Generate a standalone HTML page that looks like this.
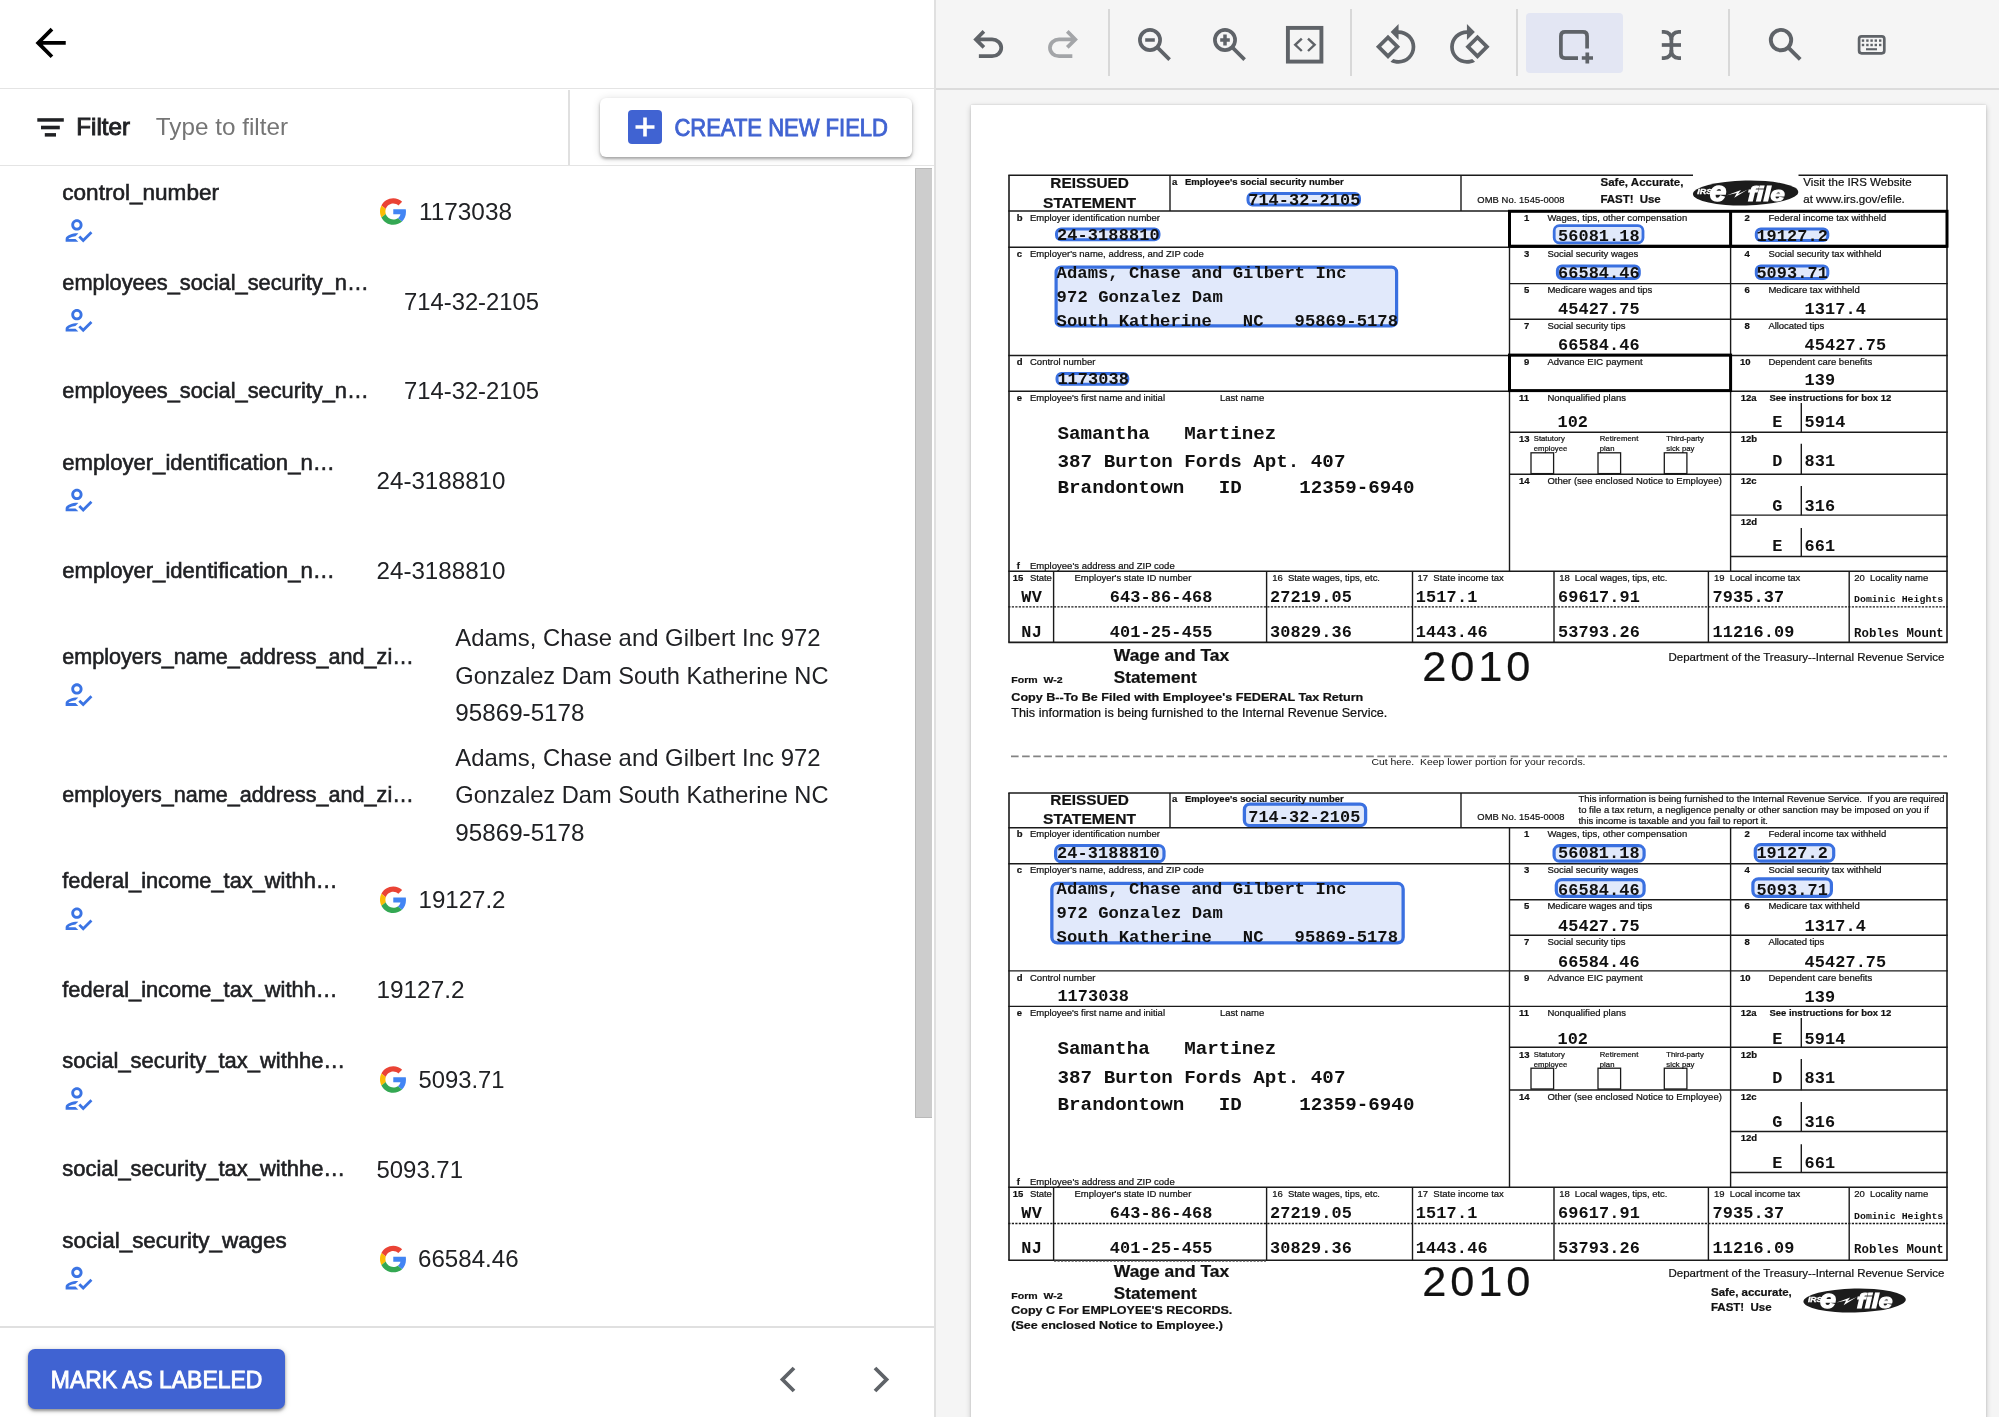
<!DOCTYPE html>
<html lang="en"><head><meta charset="utf-8"><title>Document labeling</title>
<style>
html,body{margin:0;padding:0}
body{width:1999px;height:1417px;position:relative;overflow:hidden;background:#fff;font-family:"Liberation Sans", sans-serif;}
svg text{font-family:"Liberation Sans", sans-serif;white-space:pre}
svg text.m{font-family:"Liberation Mono", monospace;stroke:none}
svg text.b{font-weight:700}
.abs{position:absolute}
#left{left:0;top:0;width:934px;height:1417px;background:#fff}
#divider{left:934px;top:0;width:2px;height:1417px;background:#e0e0e0}
#right{left:936px;top:0;width:1063px;height:1417px;background:#f5f5f5;overflow:hidden}
#toolbar{left:0;top:0;width:1063px;height:88px;border-bottom:2px solid #dcdcdc;background:#f5f5f5}
#paper{left:34.75px;top:104.75px;width:1015px;height:1314px;background:#fff;box-shadow:0 2px 6px rgba(0,0,0,.2),0 0 2px rgba(0,0,0,.14)}
#hdr{left:0;top:0;width:934px;height:88px;border-bottom:1.8px solid #e4e4e4}
#filterrow{left:0;top:90px;width:934px;height:74.8px;border-bottom:1.6px solid #e4e4e4}
#fsep{left:568px;top:90px;width:2px;height:75px;background:#e0e0e0}
#createbtn{left:600px;top:98px;width:312px;height:59px;border-radius:6px;background:#fff;box-shadow:0 2px 3px rgba(0,0,0,.3),0 1px 8px rgba(0,0,0,.14)}
#plus{left:628px;top:110px;width:34px;height:34px;border-radius:4px;background:#4063d2}
#thumb{left:915.2px;top:168.3px;width:16.6px;height:949.6px;background:#cdcdcd;border:1.3px solid #b9b9b9;border-right-width:0;box-sizing:border-box}
#bottombar{left:0;top:1326px;width:934px;height:91px;border-top:2px solid #e0e0e0;background:#fff}
#markbtn{left:28.2px;top:1349.2px;width:257.2px;height:60px;border-radius:7px;background:#4063d2;box-shadow:0 2px 3px rgba(0,0,0,.35),0 1px 6px rgba(0,0,0,.18)}
#selbg{left:590px;top:13px;width:97px;height:60px;border-radius:4px;background:#e3e6f3}
.tsep{width:2px;top:9px;height:67px;background:#d8d8d8}
#ov{left:0;top:0;width:1999px;height:1417px;pointer-events:none;will-change:transform}
</style></head>
<body>
<div id="left" class="abs">
  <div id="hdr" class="abs"></div>
  <div id="filterrow" class="abs"></div>
  <div id="fsep" class="abs"></div>
  <div id="createbtn" class="abs"></div>
  <div id="plus" class="abs"></div>
  <div id="thumb" class="abs"></div>
  <div id="bottombar" class="abs"></div>
  <div id="markbtn" class="abs"></div>
</div>
<div id="divider" class="abs"></div>
<div id="right" class="abs">
  <div id="paper" class="abs"></div>
  <div id="toolbar" class="abs">
    <div id="selbg" class="abs"></div>
    <div class="abs tsep" style="left:172px"></div>
    <div class="abs tsep" style="left:414px"></div>
    <div class="abs tsep" style="left:580px"></div>
    <div class="abs tsep" style="left:792px"></div>
  </div>
</div>
<svg id="ov" class="abs" width="1999" height="1417" viewBox="0 0 1999 1417">
<g id="ui">
<path transform="translate(27.94,20.3) scale(1.89)" fill="#000" d="M20 11H7.83l5.59-5.59L12 4l-8 8 8 8 1.41-1.41L7.83 13H20v-2z"/>
<g fill="#202124"><rect x="37.3" y="118.2" width="26.5" height="3.5"/><rect x="41" y="125.7" width="18.8" height="3.6"/><rect x="44.8" y="133.1" width="11.2" height="3.5"/></g>
<text x="76.30" y="135.00" font-size="24" textLength="53.70" lengthAdjust="spacingAndGlyphs" fill="#202124" stroke="#202124" stroke-width="0.9">Filter</text>
<text x="155.80" y="135.00" font-size="24" fill="#757575" textLength="132.20" lengthAdjust="spacingAndGlyphs">Type to filter</text>
<path d="M645 117.5v19M635.5 127h19" stroke="#fff" stroke-width="3.6" fill="none"/>
<text x="674.40" y="135.90" font-size="24" textLength="213.60" lengthAdjust="spacingAndGlyphs" fill="#4063d2" stroke="#4063d2" stroke-width="0.9">CREATE NEW FIELD</text>
<text x="62.30" y="200.00" font-size="22.4" textLength="156.70" lengthAdjust="spacingAndGlyphs" fill="#202124" stroke="#202124" stroke-width="0.6">control_number</text>
<path transform="translate(61.4,213.6) scale(1.41)" fill="#3b74e4" d="M11 12c2.21 0 4-1.79 4-4s-1.79-4-4-4-4 1.79-4 4 1.79 4 4 4zm0-6c1.1 0 2 .9 2 2s-.9 2-2 2-2-.9-2-2 .9-2 2-2zM5 18c.2-.63 2.57-1.68 4.96-1.94l2.04-2c-.39-.04-.68-.06-1-.06-2.67 0-8 1.34-8 4v2h9l-2-2H5zm15.6-5.5l-5.13 5.17-2.07-2.08L12 17l3.47 3.5L22 13.91z"/>
<g transform="translate(380,198.2) scale(0.553)"><path fill="#EA4335" d="M24 9.5c3.54 0 6.71 1.22 9.21 3.6l6.85-6.85C35.9 2.38 30.47 0 24 0 14.62 0 6.51 5.38 2.56 13.22l7.98 6.19C12.43 13.72 17.74 9.5 24 9.5z"/><path fill="#4285F4" d="M46.98 24.55c0-1.57-.15-3.09-.38-4.55H24v9.02h12.94c-.58 2.96-2.26 5.48-4.78 7.18l7.73 6c4.51-4.18 7.09-10.36 7.09-17.65z"/><path fill="#FBBC05" d="M10.53 28.59c-.48-1.45-.76-2.99-.76-4.59s.27-3.14.76-4.59l-7.98-6.19C.92 16.46 0 20.12 0 24c0 3.88.92 7.54 2.56 10.78l7.97-6.19z"/><path fill="#34A853" d="M24 48c6.48 0 11.93-2.13 15.89-5.81l-7.73-6c-2.15 1.45-4.92 2.3-8.16 2.3-6.26 0-11.57-4.22-13.47-9.91l-7.98 6.19C6.51 42.62 14.62 48 24 48z"/></g>
<text x="419.00" y="219.70" font-size="24" fill="#202124" textLength="93.00" lengthAdjust="spacingAndGlyphs">1173038</text>
<text x="62.30" y="289.85" font-size="22.4" textLength="306.50" lengthAdjust="spacingAndGlyphs" fill="#202124" stroke="#202124" stroke-width="0.6">employees_social_security_n…</text>
<path transform="translate(61.4,303.4) scale(1.41)" fill="#3b74e4" d="M11 12c2.21 0 4-1.79 4-4s-1.79-4-4-4-4 1.79-4 4 1.79 4 4 4zm0-6c1.1 0 2 .9 2 2s-.9 2-2 2-2-.9-2-2 .9-2 2-2zM5 18c.2-.63 2.57-1.68 4.96-1.94l2.04-2c-.39-.04-.68-.06-1-.06-2.67 0-8 1.34-8 4v2h9l-2-2H5zm15.6-5.5l-5.13 5.17-2.07-2.08L12 17l3.47 3.5L22 13.91z"/>
<text x="404.00" y="309.55" font-size="24" fill="#202124" textLength="135.00" lengthAdjust="spacingAndGlyphs">714-32-2105</text>
<text x="62.30" y="398.30" font-size="22.4" textLength="306.50" lengthAdjust="spacingAndGlyphs" fill="#202124" stroke="#202124" stroke-width="0.6">employees_social_security_n…</text>
<text x="404.00" y="399.40" font-size="24" fill="#202124" textLength="135.00" lengthAdjust="spacingAndGlyphs">714-32-2105</text>
<text x="62.30" y="469.55" font-size="22.4" textLength="272.50" lengthAdjust="spacingAndGlyphs" fill="#202124" stroke="#202124" stroke-width="0.6">employer_identification_n…</text>
<path transform="translate(61.4,483.1) scale(1.41)" fill="#3b74e4" d="M11 12c2.21 0 4-1.79 4-4s-1.79-4-4-4-4 1.79-4 4 1.79 4 4 4zm0-6c1.1 0 2 .9 2 2s-.9 2-2 2-2-.9-2-2 .9-2 2-2zM5 18c.2-.63 2.57-1.68 4.96-1.94l2.04-2c-.39-.04-.68-.06-1-.06-2.67 0-8 1.34-8 4v2h9l-2-2H5zm15.6-5.5l-5.13 5.17-2.07-2.08L12 17l3.47 3.5L22 13.91z"/>
<text x="376.50" y="489.25" font-size="24" fill="#202124" textLength="129.00" lengthAdjust="spacingAndGlyphs">24-3188810</text>
<text x="62.30" y="578.00" font-size="22.4" textLength="272.50" lengthAdjust="spacingAndGlyphs" fill="#202124" stroke="#202124" stroke-width="0.6">employer_identification_n…</text>
<text x="376.50" y="579.10" font-size="24" fill="#202124" textLength="129.00" lengthAdjust="spacingAndGlyphs">24-3188810</text>
<text x="62.30" y="664.08" font-size="22.4" textLength="351.50" lengthAdjust="spacingAndGlyphs" fill="#202124" stroke="#202124" stroke-width="0.6">employers_name_address_and_zi…</text>
<path transform="translate(61.4,677.7) scale(1.41)" fill="#3b74e4" d="M11 12c2.21 0 4-1.79 4-4s-1.79-4-4-4-4 1.79-4 4 1.79 4 4 4zm0-6c1.1 0 2 .9 2 2s-.9 2-2 2-2-.9-2-2 .9-2 2-2zM5 18c.2-.63 2.57-1.68 4.96-1.94l2.04-2c-.39-.04-.68-.06-1-.06-2.67 0-8 1.34-8 4v2h9l-2-2H5zm15.6-5.5l-5.13 5.17-2.07-2.08L12 17l3.47 3.5L22 13.91z"/>
<text x="455.30" y="646.30" font-size="24" fill="#202124" textLength="365.20" lengthAdjust="spacingAndGlyphs">Adams, Chase and Gilbert Inc 972</text>
<text x="455.30" y="683.70" font-size="24" fill="#202124" textLength="373.20" lengthAdjust="spacingAndGlyphs">Gonzalez Dam South Katherine NC</text>
<text x="455.30" y="721.10" font-size="24" fill="#202124" textLength="129.20" lengthAdjust="spacingAndGlyphs">95869-5178</text>
<text x="62.30" y="802.18" font-size="22.4" textLength="351.50" lengthAdjust="spacingAndGlyphs" fill="#202124" stroke="#202124" stroke-width="0.6">employers_name_address_and_zi…</text>
<text x="455.30" y="765.80" font-size="24" fill="#202124" textLength="365.20" lengthAdjust="spacingAndGlyphs">Adams, Chase and Gilbert Inc 972</text>
<text x="455.30" y="803.20" font-size="24" fill="#202124" textLength="373.20" lengthAdjust="spacingAndGlyphs">Gonzalez Dam South Katherine NC</text>
<text x="455.30" y="840.60" font-size="24" fill="#202124" textLength="129.20" lengthAdjust="spacingAndGlyphs">95869-5178</text>
<text x="62.30" y="888.25" font-size="22.4" textLength="275.30" lengthAdjust="spacingAndGlyphs" fill="#202124" stroke="#202124" stroke-width="0.6">federal_income_tax_withh…</text>
<path transform="translate(61.4,901.9) scale(1.41)" fill="#3b74e4" d="M11 12c2.21 0 4-1.79 4-4s-1.79-4-4-4-4 1.79-4 4 1.79 4 4 4zm0-6c1.1 0 2 .9 2 2s-.9 2-2 2-2-.9-2-2 .9-2 2-2zM5 18c.2-.63 2.57-1.68 4.96-1.94l2.04-2c-.39-.04-.68-.06-1-.06-2.67 0-8 1.34-8 4v2h9l-2-2H5zm15.6-5.5l-5.13 5.17-2.07-2.08L12 17l3.47 3.5L22 13.91z"/>
<g transform="translate(380,886.5) scale(0.553)"><path fill="#EA4335" d="M24 9.5c3.54 0 6.71 1.22 9.21 3.6l6.85-6.85C35.9 2.38 30.47 0 24 0 14.62 0 6.51 5.38 2.56 13.22l7.98 6.19C12.43 13.72 17.74 9.5 24 9.5z"/><path fill="#4285F4" d="M46.98 24.55c0-1.57-.15-3.09-.38-4.55H24v9.02h12.94c-.58 2.96-2.26 5.48-4.78 7.18l7.73 6c4.51-4.18 7.09-10.36 7.09-17.65z"/><path fill="#FBBC05" d="M10.53 28.59c-.48-1.45-.76-2.99-.76-4.59s.27-3.14.76-4.59l-7.98-6.19C.92 16.46 0 20.12 0 24c0 3.88.92 7.54 2.56 10.78l7.97-6.19z"/><path fill="#34A853" d="M24 48c6.48 0 11.93-2.13 15.89-5.81l-7.73-6c-2.15 1.45-4.92 2.3-8.16 2.3-6.26 0-11.57-4.22-13.47-9.91l-7.98 6.19C6.51 42.62 14.62 48 24 48z"/></g>
<text x="418.50" y="907.95" font-size="24" fill="#202124" textLength="87.00" lengthAdjust="spacingAndGlyphs">19127.2</text>
<text x="62.30" y="996.70" font-size="22.4" textLength="275.30" lengthAdjust="spacingAndGlyphs" fill="#202124" stroke="#202124" stroke-width="0.6">federal_income_tax_withh…</text>
<text x="376.50" y="997.80" font-size="24" fill="#202124" textLength="88.00" lengthAdjust="spacingAndGlyphs">19127.2</text>
<text x="62.30" y="1067.95" font-size="22.4" textLength="283.00" lengthAdjust="spacingAndGlyphs" fill="#202124" stroke="#202124" stroke-width="0.6">social_security_tax_withhe…</text>
<path transform="translate(61.4,1081.6) scale(1.41)" fill="#3b74e4" d="M11 12c2.21 0 4-1.79 4-4s-1.79-4-4-4-4 1.79-4 4 1.79 4 4 4zm0-6c1.1 0 2 .9 2 2s-.9 2-2 2-2-.9-2-2 .9-2 2-2zM5 18c.2-.63 2.57-1.68 4.96-1.94l2.04-2c-.39-.04-.68-.06-1-.06-2.67 0-8 1.34-8 4v2h9l-2-2H5zm15.6-5.5l-5.13 5.17-2.07-2.08L12 17l3.47 3.5L22 13.91z"/>
<g transform="translate(380,1066.2) scale(0.553)"><path fill="#EA4335" d="M24 9.5c3.54 0 6.71 1.22 9.21 3.6l6.85-6.85C35.9 2.38 30.47 0 24 0 14.62 0 6.51 5.38 2.56 13.22l7.98 6.19C12.43 13.72 17.74 9.5 24 9.5z"/><path fill="#4285F4" d="M46.98 24.55c0-1.57-.15-3.09-.38-4.55H24v9.02h12.94c-.58 2.96-2.26 5.48-4.78 7.18l7.73 6c4.51-4.18 7.09-10.36 7.09-17.65z"/><path fill="#FBBC05" d="M10.53 28.59c-.48-1.45-.76-2.99-.76-4.59s.27-3.14.76-4.59l-7.98-6.19C.92 16.46 0 20.12 0 24c0 3.88.92 7.54 2.56 10.78l7.97-6.19z"/><path fill="#34A853" d="M24 48c6.48 0 11.93-2.13 15.89-5.81l-7.73-6c-2.15 1.45-4.92 2.3-8.16 2.3-6.26 0-11.57-4.22-13.47-9.91l-7.98 6.19C6.51 42.62 14.62 48 24 48z"/></g>
<text x="418.50" y="1087.65" font-size="24" fill="#202124" textLength="86.00" lengthAdjust="spacingAndGlyphs">5093.71</text>
<text x="62.30" y="1176.40" font-size="22.4" textLength="283.00" lengthAdjust="spacingAndGlyphs" fill="#202124" stroke="#202124" stroke-width="0.6">social_security_tax_withhe…</text>
<text x="376.50" y="1177.50" font-size="24" fill="#202124" textLength="86.50" lengthAdjust="spacingAndGlyphs">5093.71</text>
<text x="62.30" y="1247.65" font-size="22.4" textLength="224.50" lengthAdjust="spacingAndGlyphs" fill="#202124" stroke="#202124" stroke-width="0.6">social_security_wages</text>
<path transform="translate(61.4,1261.2) scale(1.41)" fill="#3b74e4" d="M11 12c2.21 0 4-1.79 4-4s-1.79-4-4-4-4 1.79-4 4 1.79 4 4 4zm0-6c1.1 0 2 .9 2 2s-.9 2-2 2-2-.9-2-2 .9-2 2-2zM5 18c.2-.63 2.57-1.68 4.96-1.94l2.04-2c-.39-.04-.68-.06-1-.06-2.67 0-8 1.34-8 4v2h9l-2-2H5zm15.6-5.5l-5.13 5.17-2.07-2.08L12 17l3.47 3.5L22 13.91z"/>
<g transform="translate(380,1245.8) scale(0.553)"><path fill="#EA4335" d="M24 9.5c3.54 0 6.71 1.22 9.21 3.6l6.85-6.85C35.9 2.38 30.47 0 24 0 14.62 0 6.51 5.38 2.56 13.22l7.98 6.19C12.43 13.72 17.74 9.5 24 9.5z"/><path fill="#4285F4" d="M46.98 24.55c0-1.57-.15-3.09-.38-4.55H24v9.02h12.94c-.58 2.96-2.26 5.48-4.78 7.18l7.73 6c4.51-4.18 7.09-10.36 7.09-17.65z"/><path fill="#FBBC05" d="M10.53 28.59c-.48-1.45-.76-2.99-.76-4.59s.27-3.14.76-4.59l-7.98-6.19C.92 16.46 0 20.12 0 24c0 3.88.92 7.54 2.56 10.78l7.97-6.19z"/><path fill="#34A853" d="M24 48c6.48 0 11.93-2.13 15.89-5.81l-7.73-6c-2.15 1.45-4.92 2.3-8.16 2.3-6.26 0-11.57-4.22-13.47-9.91l-7.98 6.19C6.51 42.62 14.62 48 24 48z"/></g>
<text x="418.00" y="1267.35" font-size="24" fill="#202124" textLength="100.60" lengthAdjust="spacingAndGlyphs">66584.46</text>
<text x="50.80" y="1388.00" font-size="24" textLength="211.50" lengthAdjust="spacingAndGlyphs" fill="#fff" stroke="#fff" stroke-width="0.9">MARK AS LABELED</text>
<path d="M794,1368 L782.5,1379.5 L794,1391" fill="none" stroke="#5f6368" stroke-width="3.8"/>
<path d="M875,1368 L886.5,1379.5 L875,1391" fill="none" stroke="#5f6368" stroke-width="3.8"/>
<path transform="translate(965.8,22.6) scale(1.8667)" fill="#5f6368" d="M7 19v-2h7.1q1.575 0 2.737-1T18 13.5T16.837 11T14.1 10H7.8l2.6 2.6L9 14L4 9l5-5l1.4 1.4L7.8 8h6.3q2.425 0 4.163 1.575T20 13.5t-1.737 3.925T14.1 19z"/>
<path transform="translate(1085.4,22.6) scale(-1.8667,1.8667)" fill="#a3a5a8" d="M7 19v-2h7.1q1.575 0 2.737-1T18 13.5T16.837 11T14.1 10H7.8l2.6 2.6L9 14L4 9l5-5l1.4 1.4L7.8 8h6.3q2.425 0 4.163 1.575T20 13.5t-1.737 3.925T14.1 19z"/>
<g fill="none" stroke="#5f6368" stroke-width="3.7"><circle cx="1150" cy="40" r="10.1"/><path d="M1157.6,47.6 L1169.6,59.6"/><path stroke-width="3.5" d="M1145.2,40 H1154.8"/></g>
<g fill="none" stroke="#5f6368" stroke-width="3.7"><circle cx="1225" cy="40" r="10.1"/><path d="M1232.6,47.6 L1244.6,59.6"/><path stroke-width="3.5" d="M1220.2,40 H1229.8 M1225,34.6 V45.4"/></g>
<g fill="none" stroke="#5f6368"><rect x="1287.9" y="27.9" width="33.5" height="33.7" stroke-width="3.9"/><path stroke-width="2.4" d="M1301.8,38.6 L1295.2,44.8 L1301.8,51 M1308,38.6 L1314.6,44.8 L1308,51"/></g>
<path transform="translate(1374.3,22.7) scale(1.8667)" fill="#5f6368" d="M7.34 6.41L.86 12.9l6.49 6.48 6.49-6.48-6.5-6.49zM3.69 12.9l3.66-3.66L11 12.9l-3.66 3.66-3.65-3.66zm15.67-6.26C17.61 4.88 15.3 4 13 4V.76L8.76 5 13 9.24V6c1.79 0 3.58.68 4.95 2.05 2.73 2.73 2.73 7.17 0 9.9C16.58 19.32 14.79 20 13 20c-.97 0-1.94-.21-2.84-.61l-1.49 1.49C10.02 21.62 11.51 22 13 22c2.3 0 4.61-.88 6.36-2.64 3.52-3.51 3.52-9.21 0-12.72z"/>
<path transform="translate(1491.2,22.7) scale(-1.8667,1.8667)" fill="#5f6368" d="M7.34 6.41L.86 12.9l6.49 6.48 6.49-6.48-6.5-6.49zM3.69 12.9l3.66-3.66L11 12.9l-3.66 3.66-3.65-3.66zm15.67-6.26C17.61 4.88 15.3 4 13 4V.76L8.76 5 13 9.24V6c1.79 0 3.58.68 4.95 2.05 2.73 2.73 2.73 7.17 0 9.9C16.58 19.32 14.79 20 13 20c-.97 0-1.94-.21-2.84-.61l-1.49 1.49C10.02 21.62 11.51 22 13 22c2.3 0 4.61-.88 6.36-2.64 3.52-3.51 3.52-9.21 0-12.72z"/>
<g fill="none" stroke="#5f6368" stroke-width="3.7"><path d="M1578,58.1 H1565 Q1560.9,58.1 1560.9,54 V36 Q1560.9,31.9 1565,31.9 H1583 Q1587.1,31.9 1587.1,36 V48.6"/><path d="M1581.8,58 H1593 M1587.3,52.4 V63.6"/></g>
<g fill="none" stroke="#5f6368" stroke-width="3.7"><path d="M1661.8,31.9 H1664 Q1671.4,32.2 1671.4,40 V50 Q1671.4,57.8 1664,58.1 H1661.8"/><path d="M1681,31.9 H1678.8 Q1671.4,32.2 1671.4,40 M1671.4,50 Q1671.4,57.8 1678.8,58.1 H1681"/><path d="M1661.8,45 H1681"/></g>
<g fill="none" stroke="#5f6368" stroke-width="3.9"><circle cx="1781" cy="40.1" r="10.2"/><path d="M1788.6,47.8 L1800.2,59.4"/></g>
<rect x="1859.1" y="36.3" width="25.2" height="17" rx="2.5" fill="none" stroke="#5f6368" stroke-width="2.7"/><rect x="1861.8" y="39.4" width="2.4" height="2.4" fill="#5f6368"/><rect x="1866.2" y="39.4" width="2.4" height="2.4" fill="#5f6368"/><rect x="1870.4" y="39.4" width="2.4" height="2.4" fill="#5f6368"/><rect x="1874.6" y="39.4" width="2.4" height="2.4" fill="#5f6368"/><rect x="1879.0" y="39.4" width="2.4" height="2.4" fill="#5f6368"/><rect x="1861.8" y="43.8" width="2.4" height="2.4" fill="#5f6368"/><rect x="1866.2" y="43.8" width="2.4" height="2.4" fill="#5f6368"/><rect x="1870.4" y="43.8" width="2.4" height="2.4" fill="#5f6368"/><rect x="1874.6" y="43.8" width="2.4" height="2.4" fill="#5f6368"/><rect x="1879.0" y="43.8" width="2.4" height="2.4" fill="#5f6368"/><rect x="1866" y="48.2" width="11" height="2.1" fill="#5f6368"/>
</g>
<g id="doc">
<rect x="1248.00" y="193.40" width="111.50" height="11.60" rx="4.5" fill="#e1e9fb" stroke="#3a70e0" stroke-width="3.0"/>
<rect x="1056.50" y="229.00" width="102.50" height="10.80" rx="4.5" fill="#e1e9fb" stroke="#3a70e0" stroke-width="3.0"/>
<rect x="1056.10" y="267.20" width="340.50" height="58.70" rx="5" fill="#e1e9fb" stroke="#3a70e0" stroke-width="3.2"/>
<rect x="1057.00" y="373.50" width="70.80" height="10.80" rx="4.5" fill="#e1e9fb" stroke="#3a70e0" stroke-width="3.0"/>
<rect x="1554.20" y="225.70" width="88.80" height="17.10" rx="5" fill="#e1e9fb" stroke="#3a70e0" stroke-width="2.8"/>
<rect x="1756.30" y="229.10" width="71.50" height="11.50" rx="4.5" fill="#e1e9fb" stroke="#3a70e0" stroke-width="3.0"/>
<rect x="1557.40" y="266.10" width="81.90" height="12.30" rx="4.5" fill="#e1e9fb" stroke="#3a70e0" stroke-width="3.0"/>
<rect x="1756.30" y="266.10" width="71.50" height="12.30" rx="4.5" fill="#e1e9fb" stroke="#3a70e0" stroke-width="3.0"/>
<g fill="none" stroke="#1a1a1a"><path d="M1008.3,175.3 L1693.0,175.3" stroke-width="1.6" /><path d="M1798.5,175.3 L1947.7,175.3" stroke-width="1.6" /><path d="M1008.3,211.0 L1947.7,211.0" stroke-width="1.4" /><path d="M1008.3,247.2 L1947.7,247.2" stroke-width="1.4" /><path d="M1509.5,283.6 L1947.7,283.6" stroke-width="1.4" /><path d="M1509.5,319.3 L1947.7,319.3" stroke-width="1.4" /><path d="M1008.3,355.5 L1947.7,355.5" stroke-width="1.4" /><path d="M1008.3,391.3 L1947.7,391.3" stroke-width="1.4" /><path d="M1509.5,432.2 L1947.7,432.2" stroke-width="1.4" /><path d="M1509.5,474.2 L1947.7,474.2" stroke-width="1.4" /><path d="M1730.6,515.1 L1947.7,515.1" stroke-width="1.4" /><path d="M1730.6,556.5 L1947.7,556.5" stroke-width="1.4" /><path d="M1008.3,571.2 L1947.7,571.2" stroke-width="1.4" /><path d="M1008.3,642.4 L1947.7,642.4" stroke-width="1.6" /><path d="M1008.3,606.9 L1947.7,606.9" stroke-width="1.3" stroke-dasharray="2.2 1.3"/><path d="M1009.0,175.3 L1009.0,642.4" stroke-width="1.6" /><path d="M1947.0,175.3 L1947.0,642.4" stroke-width="1.6" /><path d="M1170.0,175.3 L1170.0,211.0" stroke-width="1.4" /><path d="M1461.0,175.3 L1461.0,211.0" stroke-width="1.4" /><path d="M1509.5,211.0 L1509.5,571.3" stroke-width="1.4" /><path d="M1730.6,211.0 L1730.6,571.3" stroke-width="1.4" /><path d="M1801.3,403.0 L1801.3,432.3" stroke-width="1.4" /><path d="M1801.3,443.8 L1801.3,474.4" stroke-width="1.4" /><path d="M1801.3,485.9 L1801.3,515.2" stroke-width="1.4" /><path d="M1801.3,528.0 L1801.3,556.5" stroke-width="1.4" /><path d="M1053.6,571.3 L1053.6,642.4" stroke-width="1.4" /><path d="M1266.6,571.3 L1266.6,642.4" stroke-width="1.4" /><path d="M1412.5,571.3 L1412.5,642.4" stroke-width="1.4" /><path d="M1554.0,571.3 L1554.0,642.4" stroke-width="1.4" /><path d="M1708.4,571.3 L1708.4,642.4" stroke-width="1.4" /><path d="M1849.2,571.3 L1849.2,642.4" stroke-width="1.4" /><rect x="1531" y="452.8" width="22.6" height="20.8" stroke-width="1.3"/><rect x="1598" y="452.8" width="22.6" height="20.8" stroke-width="1.3"/><rect x="1664.3" y="452.8" width="22.6" height="20.8" stroke-width="1.3"/><rect x="1509.5" y="211.3" width="437.5" height="34.9" stroke-width="3" stroke="#000"/><path d="M1730.6,211.3 L1730.6,246.2" stroke-width="3" stroke="#000"/><rect x="1509.5" y="355.1" width="221.1" height="35.5" stroke-width="3" stroke="#000"/></g>
<g fill="#111" stroke="#111" stroke-width="0.22"><text x="1050.30" y="188.10" font-size="14.9" class="b" textLength="78.70" lengthAdjust="spacingAndGlyphs">REISSUED</text><text x="1043.00" y="207.50" font-size="14.9" class="b" textLength="93.00" lengthAdjust="spacingAndGlyphs">STATEMENT</text><text x="1172.00" y="185.00" font-size="9.5" class="b">a</text><text x="1185.00" y="185.00" font-size="9.5" class="b" textLength="158.80" lengthAdjust="spacing">Employee's social security number</text><text x="1248.20" y="205.00" font-size="16.9" class="m b" textLength="112.10" lengthAdjust="spacing">714-32-2105</text><text x="1477.30" y="202.90" font-size="9.4" textLength="87.20" lengthAdjust="spacing">OMB No. 1545-0008</text><text x="1016.80" y="221.00" font-size="9.5" class="b">b</text><text x="1016.80" y="257.00" font-size="9.5" class="b">c</text><text x="1016.80" y="364.50" font-size="9.5" class="b">d</text><text x="1016.80" y="400.60" font-size="9.5" class="b">e</text><text x="1016.80" y="569.00" font-size="9.5" class="b">f</text><text x="1030.00" y="221.00" font-size="9.5" textLength="130.00" lengthAdjust="spacing">Employer identification number</text><text x="1057.00" y="240.00" font-size="16.9" class="m b" textLength="102.60" lengthAdjust="spacing">24-3188810</text><text x="1030.00" y="257.00" font-size="9.5" textLength="173.80" lengthAdjust="spacing">Employer's name, address, and ZIP code</text><text x="1056.60" y="277.50" font-size="17.2" class="m b" textLength="289.90" lengthAdjust="spacing">Adams, Chase and Gilbert Inc</text><text x="1056.60" y="301.60" font-size="17.2" class="m b" textLength="166.20" lengthAdjust="spacing">972 Gonzalez Dam</text><text x="1056.60" y="325.50" font-size="17.2" class="m b" textLength="341.40" lengthAdjust="spacing">South Katherine   NC   95869-5178</text><text x="1030.00" y="364.50" font-size="9.5" textLength="65.50" lengthAdjust="spacing">Control number</text><text x="1057.40" y="384.30" font-size="16.9" class="m b" textLength="71.40" lengthAdjust="spacing">1173038</text><text x="1030.00" y="400.60" font-size="9.5" textLength="135.00" lengthAdjust="spacing">Employee's first name and initial</text><text x="1220.00" y="400.60" font-size="9.5" textLength="44.30" lengthAdjust="spacing">Last name</text><text x="1057.60" y="438.70" font-size="19.2" class="m b" textLength="218.60" lengthAdjust="spacing">Samantha   Martinez</text><text x="1057.60" y="466.70" font-size="19.2" class="m b" textLength="287.80" lengthAdjust="spacing">387 Burton Fords Apt. 407</text><text x="1057.60" y="493.30" font-size="19.2" class="m b" textLength="356.80" lengthAdjust="spacing">Brandontown   ID     12359-6940</text><text x="1030.00" y="569.00" font-size="9.5" textLength="144.70" lengthAdjust="spacing">Employee's address and ZIP code</text><text x="1524.00" y="220.70" font-size="9.5" class="b">1</text><text x="1547.40" y="220.70" font-size="9.5" textLength="139.80" lengthAdjust="spacing">Wages, tips, other compensation</text><text x="1744.60" y="220.70" font-size="9.5" class="b">2</text><text x="1768.40" y="220.70" font-size="9.5" textLength="117.80" lengthAdjust="spacing">Federal income tax withheld</text><text x="1524.00" y="256.90" font-size="9.5" class="b">3</text><text x="1547.40" y="256.90" font-size="9.5" textLength="90.90" lengthAdjust="spacing">Social security wages</text><text x="1744.60" y="256.90" font-size="9.5" class="b">4</text><text x="1768.40" y="256.90" font-size="9.5" textLength="113.20" lengthAdjust="spacing">Social security tax withheld</text><text x="1524.00" y="292.70" font-size="9.5" class="b">5</text><text x="1547.40" y="292.70" font-size="9.5" textLength="104.90" lengthAdjust="spacing">Medicare wages and tips</text><text x="1744.60" y="292.70" font-size="9.5" class="b">6</text><text x="1768.40" y="292.70" font-size="9.5" textLength="91.30" lengthAdjust="spacing">Medicare tax withheld</text><text x="1524.00" y="328.80" font-size="9.5" class="b">7</text><text x="1547.40" y="328.80" font-size="9.5" textLength="78.10" lengthAdjust="spacing">Social security tips</text><text x="1744.60" y="328.80" font-size="9.5" class="b">8</text><text x="1768.40" y="328.80" font-size="9.5" textLength="55.80" lengthAdjust="spacing">Allocated tips</text><text x="1524.00" y="364.60" font-size="9.5" class="b">9</text><text x="1547.40" y="364.60" font-size="9.5" textLength="95.20" lengthAdjust="spacing">Advance EIC payment</text><text x="1740.00" y="364.60" font-size="9.5" class="b">10</text><text x="1768.40" y="364.60" font-size="9.5" textLength="103.80" lengthAdjust="spacing">Dependent care benefits</text><text x="1518.90" y="400.60" font-size="9.5" class="b">11</text><text x="1547.40" y="400.60" font-size="9.5" textLength="78.60" lengthAdjust="spacing">Nonqualified plans</text><text x="1740.80" y="400.60" font-size="9.5" class="b">12a</text><text x="1769.40" y="400.60" font-size="9.5" class="b" textLength="121.90" lengthAdjust="spacing">See instructions for box 12</text><text x="1518.90" y="483.80" font-size="9.5" class="b">14</text><text x="1547.40" y="483.80" font-size="9.5" textLength="174.50" lengthAdjust="spacing">Other (see enclosed Notice to Employee)</text><text x="1740.80" y="442.00" font-size="9.5" class="b">12b</text><text x="1740.80" y="483.80" font-size="9.5" class="b">12c</text><text x="1740.80" y="524.90" font-size="9.5" class="b">12d</text><text x="1518.90" y="442.00" font-size="9.5" class="b">13</text><text x="1533.70" y="440.70" font-size="7.7" textLength="31.10" lengthAdjust="spacing">Statutory</text><text x="1533.70" y="450.90" font-size="7.7" textLength="33.60" lengthAdjust="spacing">employee</text><text x="1599.70" y="440.70" font-size="7.7" textLength="38.60" lengthAdjust="spacing">Retirement</text><text x="1599.70" y="450.90" font-size="7.7" textLength="14.80" lengthAdjust="spacing">plan</text><text x="1666.30" y="440.70" font-size="7.7" textLength="37.50" lengthAdjust="spacing">Third-party</text><text x="1666.30" y="450.90" font-size="7.7" textLength="28.10" lengthAdjust="spacing">sick pay</text><text x="1558.00" y="240.90" font-size="16.9" class="m b" textLength="81.60" lengthAdjust="spacing">56081.18</text><text x="1756.40" y="240.90" font-size="16.9" class="m b" textLength="71.40" lengthAdjust="spacing">19127.2</text><text x="1558.00" y="278.40" font-size="16.9" class="m b" textLength="81.60" lengthAdjust="spacing">66584.46</text><text x="1756.40" y="278.40" font-size="16.9" class="m b" textLength="71.40" lengthAdjust="spacing">5093.71</text><text x="1558.00" y="314.10" font-size="16.9" class="m b" textLength="81.60" lengthAdjust="spacing">45427.75</text><text x="1804.60" y="314.10" font-size="16.9" class="m b" textLength="61.20" lengthAdjust="spacing">1317.4</text><text x="1558.00" y="349.80" font-size="16.9" class="m b" textLength="81.60" lengthAdjust="spacing">66584.46</text><text x="1804.60" y="349.80" font-size="16.9" class="m b" textLength="81.60" lengthAdjust="spacing">45427.75</text><text x="1804.60" y="385.00" font-size="16.9" class="m b" textLength="30.60" lengthAdjust="spacing">139</text><text x="1557.40" y="426.90" font-size="16.9" class="m b" textLength="30.60" lengthAdjust="spacing">102</text><text x="1772.30" y="426.90" font-size="16.9" class="m b" textLength="10.20" lengthAdjust="spacing">E</text><text x="1804.60" y="426.90" font-size="16.9" class="m b" textLength="40.80" lengthAdjust="spacing">5914</text><text x="1772.30" y="466.00" font-size="16.9" class="m b" textLength="10.20" lengthAdjust="spacing">D</text><text x="1804.60" y="466.00" font-size="16.9" class="m b" textLength="30.60" lengthAdjust="spacing">831</text><text x="1772.30" y="510.60" font-size="16.9" class="m b" textLength="10.20" lengthAdjust="spacing">G</text><text x="1804.60" y="510.60" font-size="16.9" class="m b" textLength="30.60" lengthAdjust="spacing">316</text><text x="1772.30" y="550.90" font-size="16.9" class="m b" textLength="10.20" lengthAdjust="spacing">E</text><text x="1804.60" y="550.90" font-size="16.9" class="m b" textLength="30.60" lengthAdjust="spacing">661</text><text x="1012.80" y="581.00" font-size="9.5" class="b">15</text><text x="1030.00" y="581.00" font-size="9.5" textLength="21.80" lengthAdjust="spacing">State</text><text x="1074.50" y="581.00" font-size="9.5" textLength="116.80" lengthAdjust="spacing">Employer's state ID number</text><text x="1272.20" y="581.00" font-size="9.5" textLength="107.80" lengthAdjust="spacing">16  State wages, tips, etc.</text><text x="1417.60" y="581.00" font-size="9.5" textLength="86.20" lengthAdjust="spacing">17  State income tax</text><text x="1559.20" y="581.00" font-size="9.5" textLength="108.10" lengthAdjust="spacing">18  Local wages, tips, etc.</text><text x="1714.00" y="581.00" font-size="9.5" textLength="86.30" lengthAdjust="spacing">19  Local income tax</text><text x="1854.30" y="581.00" font-size="9.5" textLength="74.00" lengthAdjust="spacing">20  Locality name</text><text x="1021.30" y="601.90" font-size="16.9" class="m b" textLength="20.50" lengthAdjust="spacing">WV</text><text x="1109.80" y="601.90" font-size="16.9" class="m b" textLength="102.50" lengthAdjust="spacing">643-86-468</text><text x="1270.00" y="601.90" font-size="16.9" class="m b" textLength="82.00" lengthAdjust="spacing">27219.05</text><text x="1415.80" y="601.90" font-size="16.9" class="m b" textLength="61.50" lengthAdjust="spacing">1517.1</text><text x="1558.00" y="601.90" font-size="16.9" class="m b" textLength="82.00" lengthAdjust="spacing">69617.91</text><text x="1712.40" y="601.90" font-size="16.9" class="m b" textLength="71.75" lengthAdjust="spacing">7935.37</text><text x="1021.30" y="636.90" font-size="16.9" class="m b" textLength="20.50" lengthAdjust="spacing">NJ</text><text x="1109.80" y="636.90" font-size="16.9" class="m b" textLength="102.50" lengthAdjust="spacing">401-25-455</text><text x="1270.00" y="636.90" font-size="16.9" class="m b" textLength="82.00" lengthAdjust="spacing">30829.36</text><text x="1415.80" y="636.90" font-size="16.9" class="m b" textLength="71.75" lengthAdjust="spacing">1443.46</text><text x="1558.00" y="636.90" font-size="16.9" class="m b" textLength="82.00" lengthAdjust="spacing">53793.26</text><text x="1712.40" y="636.90" font-size="16.9" class="m b" textLength="82.00" lengthAdjust="spacing">11216.09</text><text x="1854.00" y="602.40" font-size="9.9" class="m b" textLength="89.30" lengthAdjust="spacing">Dominic Heights</text><text x="1854.00" y="637.20" font-size="12.4" class="m b" textLength="89.80" lengthAdjust="spacing">Robles Mount</text><text x="1113.80" y="661.20" font-size="16.7" class="b" textLength="115.50" lengthAdjust="spacingAndGlyphs">Wage and Tax</text><text x="1113.80" y="683.10" font-size="16.7" class="b" textLength="82.90" lengthAdjust="spacingAndGlyphs">Statement</text><text x="1011.30" y="683.40" font-size="9.9" class="b" textLength="51.30" lengthAdjust="spacingAndGlyphs">Form  W-2</text><text x="1422.30" y="680.80" font-size="43.3" textLength="108.10" lengthAdjust="spacing">2010</text><text x="1668.50" y="661.00" font-size="11.5" textLength="276.00" lengthAdjust="spacing">Department of the Treasury--Internal Revenue Service</text><text x="1600.50" y="185.50" font-size="11.5" class="b" textLength="82.90" lengthAdjust="spacing">Safe, Accurate,</text><text x="1600.50" y="202.90" font-size="11.5" class="b" textLength="60.20" lengthAdjust="spacing">FAST!  Use</text><text x="1803.30" y="185.50" font-size="11.5" textLength="108.40" lengthAdjust="spacing">Visit the IRS Website</text><text x="1803.30" y="202.90" font-size="11.5" textLength="101.50" lengthAdjust="spacing">at www.irs.gov/efile.</text><text x="1011.30" y="700.60" font-size="11.8" class="b" textLength="352.00" lengthAdjust="spacingAndGlyphs">Copy B--To Be Filed with Employee's FEDERAL Tax Return</text><text x="1011.30" y="716.80" font-size="12.2" textLength="376.00" lengthAdjust="spacingAndGlyphs">This information is being furnished to the Internal Revenue Service.</text></g>
<g transform="translate(1745.6,193)"><ellipse cx="0" cy="0" rx="52.7" ry="12.4" fill="#1c1c1c" transform="rotate(-1.2)"/><g transform="scale(1.0)" fill="#fff" stroke="#fff" font-style="italic" font-weight="700"><text x="-48.4" y="1.3" font-size="7.6" textLength="15" lengthAdjust="spacingAndGlyphs" stroke-width="0.35">IRS</text><text x="-35.8" y="7.7" font-size="27" textLength="16.6" lengthAdjust="spacingAndGlyphs" stroke-width="1.3">e</text><text x="2.2" y="7.5" font-size="20.2" textLength="37" lengthAdjust="spacingAndGlyphs" stroke-width="1.1">file</text><path stroke="none" d="M-18.6,2.2 L-4.6,-3 L-7.6,0.9 L2.2,-3.6 L-11.4,4.8 L-8.8,0 Z"/></g></g>
<path d="M1011,756.4 L1947,756.4" stroke="#838383" stroke-width="1.8" stroke-dasharray="7.6 3.5" fill="none"/>
<text x="1371.40" y="765.40" font-size="9.3" fill="#111" textLength="214.10" lengthAdjust="spacingAndGlyphs">Cut here.  Keep lower portion for your records.</text>
<rect x="1244.40" y="804.15" width="121.20" height="21.50" rx="5.5" fill="#e1e9fb" stroke="#3a70e0" stroke-width="3.3"/>
<rect x="1055.60" y="845.50" width="108.40" height="16.20" rx="5.5" fill="#e1e9fb" stroke="#3a70e0" stroke-width="3.2"/>
<rect x="1051.85" y="883.45" width="351.30" height="59.40" rx="5.5" fill="#e1e9fb" stroke="#3a70e0" stroke-width="3.3"/>
<rect x="1554.10" y="845.70" width="90.00" height="15.50" rx="5.5" fill="#e1e9fb" stroke="#3a70e0" stroke-width="3.2"/>
<rect x="1755.30" y="844.70" width="78.40" height="16.50" rx="5.5" fill="#e1e9fb" stroke="#3a70e0" stroke-width="3.2"/>
<rect x="1556.30" y="879.60" width="87.80" height="16.80" rx="5.5" fill="#e1e9fb" stroke="#3a70e0" stroke-width="3.2"/>
<rect x="1752.90" y="878.80" width="78.50" height="17.60" rx="5.5" fill="#e1e9fb" stroke="#3a70e0" stroke-width="3.2"/>
<g fill="none" stroke="#1a1a1a"><path d="M1008.3,793.0 L1947.7,793.0" stroke-width="1.6" /><path d="M1008.3,827.7 L1947.7,827.7" stroke-width="1.4" /><path d="M1008.3,863.8 L1947.7,863.8" stroke-width="1.4" /><path d="M1509.5,899.7 L1947.7,899.7" stroke-width="1.4" /><path d="M1509.5,935.3 L1947.7,935.3" stroke-width="1.4" /><path d="M1008.3,970.9 L1947.7,970.9" stroke-width="1.4" /><path d="M1008.3,1006.4 L1947.7,1006.4" stroke-width="1.4" /><path d="M1509.5,1047.3 L1947.7,1047.3" stroke-width="1.4" /><path d="M1509.5,1090.0 L1947.7,1090.0" stroke-width="1.4" /><path d="M1730.6,1131.5 L1947.7,1131.5" stroke-width="1.4" /><path d="M1730.6,1172.5 L1947.7,1172.5" stroke-width="1.4" /><path d="M1008.3,1187.3 L1947.7,1187.3" stroke-width="1.4" /><path d="M1008.3,1260.2 L1947.7,1260.2" stroke-width="1.6" /><path d="M1008.3,1223.5 L1947.7,1223.5" stroke-width="1.3" stroke-dasharray="2.2 1.3"/><path d="M1009.0,793.0 L1009.0,1260.2" stroke-width="1.6" /><path d="M1947.0,793.0 L1947.0,1260.2" stroke-width="1.6" /><path d="M1170.0,793.0 L1170.0,827.7" stroke-width="1.4" /><path d="M1461.0,793.0 L1461.0,827.7" stroke-width="1.4" /><path d="M1509.5,827.7 L1509.5,1187.4" stroke-width="1.4" /><path d="M1730.6,827.7 L1730.6,1187.4" stroke-width="1.4" /><path d="M1801.3,1018.1 L1801.3,1047.4" stroke-width="1.4" /><path d="M1801.3,1059.1 L1801.3,1090.2" stroke-width="1.4" /><path d="M1801.3,1101.9 L1801.3,1131.6" stroke-width="1.4" /><path d="M1801.3,1144.3 L1801.3,1172.5" stroke-width="1.4" /><path d="M1053.6,1187.4 L1053.6,1260.2" stroke-width="1.4" /><path d="M1266.6,1187.4 L1266.6,1260.2" stroke-width="1.4" /><path d="M1412.5,1187.4 L1412.5,1260.2" stroke-width="1.4" /><path d="M1554.0,1187.4 L1554.0,1260.2" stroke-width="1.4" /><path d="M1708.4,1187.4 L1708.4,1260.2" stroke-width="1.4" /><path d="M1849.2,1187.4 L1849.2,1260.2" stroke-width="1.4" /><rect x="1531" y="1068.2" width="22.6" height="20.8" stroke-width="1.3"/><rect x="1598" y="1068.2" width="22.6" height="20.8" stroke-width="1.3"/><rect x="1664.3" y="1068.2" width="22.6" height="20.8" stroke-width="1.3"/><path d="M1054.0,1261.2 L1266.0,1261.2" stroke-width="1.2" stroke-dasharray="2.2 1.3" stroke="#555"/></g>
<g fill="#111" stroke="#111" stroke-width="0.22"><text x="1050.30" y="805.44" font-size="14.9" class="b" textLength="78.70" lengthAdjust="spacingAndGlyphs">REISSUED</text><text x="1043.00" y="824.30" font-size="14.9" class="b" textLength="93.00" lengthAdjust="spacingAndGlyphs">STATEMENT</text><text x="1172.00" y="802.43" font-size="9.5" class="b">a</text><text x="1185.00" y="802.43" font-size="9.5" class="b" textLength="158.80" lengthAdjust="spacing">Employee's social security number</text><text x="1248.20" y="821.87" font-size="16.9" class="m b" textLength="112.10" lengthAdjust="spacing">714-32-2105</text><text x="1477.30" y="819.83" font-size="9.4" textLength="87.20" lengthAdjust="spacing">OMB No. 1545-0008</text><text x="1016.80" y="837.20" font-size="9.5" class="b">b</text><text x="1016.80" y="873.20" font-size="9.5" class="b">c</text><text x="1016.80" y="980.70" font-size="9.5" class="b">d</text><text x="1016.80" y="1016.00" font-size="9.5" class="b">e</text><text x="1016.80" y="1185.20" font-size="9.5" class="b">f</text><text x="1030.00" y="837.20" font-size="9.5" textLength="130.00" lengthAdjust="spacing">Employer identification number</text><text x="1057.00" y="858.00" font-size="16.9" class="m b" textLength="102.60" lengthAdjust="spacing">24-3188810</text><text x="1030.00" y="873.20" font-size="9.5" textLength="173.80" lengthAdjust="spacing">Employer's name, address, and ZIP code</text><text x="1056.60" y="893.70" font-size="17.2" class="m b" textLength="289.90" lengthAdjust="spacing">Adams, Chase and Gilbert Inc</text><text x="1056.60" y="917.80" font-size="17.2" class="m b" textLength="166.20" lengthAdjust="spacing">972 Gonzalez Dam</text><text x="1056.60" y="941.70" font-size="17.2" class="m b" textLength="341.40" lengthAdjust="spacing">South Katherine   NC   95869-5178</text><text x="1030.00" y="980.70" font-size="9.5" textLength="65.50" lengthAdjust="spacing">Control number</text><text x="1057.40" y="1000.50" font-size="16.9" class="m b" textLength="71.40" lengthAdjust="spacing">1173038</text><text x="1030.00" y="1016.00" font-size="9.5" textLength="135.00" lengthAdjust="spacing">Employee's first name and initial</text><text x="1220.00" y="1016.00" font-size="9.5" textLength="44.30" lengthAdjust="spacing">Last name</text><text x="1057.60" y="1054.30" font-size="19.2" class="m b" textLength="218.60" lengthAdjust="spacing">Samantha   Martinez</text><text x="1057.60" y="1082.90" font-size="19.2" class="m b" textLength="287.80" lengthAdjust="spacing">387 Burton Fords Apt. 407</text><text x="1057.60" y="1109.50" font-size="19.2" class="m b" textLength="356.80" lengthAdjust="spacing">Brandontown   ID     12359-6940</text><text x="1030.00" y="1185.20" font-size="9.5" textLength="144.70" lengthAdjust="spacing">Employee's address and ZIP code</text><text x="1524.00" y="836.90" font-size="9.5" class="b">1</text><text x="1547.40" y="836.90" font-size="9.5" textLength="139.80" lengthAdjust="spacing">Wages, tips, other compensation</text><text x="1744.60" y="836.90" font-size="9.5" class="b">2</text><text x="1768.40" y="836.90" font-size="9.5" textLength="117.80" lengthAdjust="spacing">Federal income tax withheld</text><text x="1524.00" y="873.10" font-size="9.5" class="b">3</text><text x="1547.40" y="873.10" font-size="9.5" textLength="90.90" lengthAdjust="spacing">Social security wages</text><text x="1744.60" y="873.10" font-size="9.5" class="b">4</text><text x="1768.40" y="873.10" font-size="9.5" textLength="113.20" lengthAdjust="spacing">Social security tax withheld</text><text x="1524.00" y="908.90" font-size="9.5" class="b">5</text><text x="1547.40" y="908.90" font-size="9.5" textLength="104.90" lengthAdjust="spacing">Medicare wages and tips</text><text x="1744.60" y="908.90" font-size="9.5" class="b">6</text><text x="1768.40" y="908.90" font-size="9.5" textLength="91.30" lengthAdjust="spacing">Medicare tax withheld</text><text x="1524.00" y="945.00" font-size="9.5" class="b">7</text><text x="1547.40" y="945.00" font-size="9.5" textLength="78.10" lengthAdjust="spacing">Social security tips</text><text x="1744.60" y="945.00" font-size="9.5" class="b">8</text><text x="1768.40" y="945.00" font-size="9.5" textLength="55.80" lengthAdjust="spacing">Allocated tips</text><text x="1524.00" y="980.80" font-size="9.5" class="b">9</text><text x="1547.40" y="980.80" font-size="9.5" textLength="95.20" lengthAdjust="spacing">Advance EIC payment</text><text x="1740.00" y="980.80" font-size="9.5" class="b">10</text><text x="1768.40" y="980.80" font-size="9.5" textLength="103.80" lengthAdjust="spacing">Dependent care benefits</text><text x="1518.90" y="1016.00" font-size="9.5" class="b">11</text><text x="1547.40" y="1016.00" font-size="9.5" textLength="78.60" lengthAdjust="spacing">Nonqualified plans</text><text x="1740.80" y="1016.00" font-size="9.5" class="b">12a</text><text x="1769.40" y="1016.00" font-size="9.5" class="b" textLength="121.90" lengthAdjust="spacing">See instructions for box 12</text><text x="1518.90" y="1100.00" font-size="9.5" class="b">14</text><text x="1547.40" y="1100.00" font-size="9.5" textLength="174.50" lengthAdjust="spacing">Other (see enclosed Notice to Employee)</text><text x="1740.80" y="1058.20" font-size="9.5" class="b">12b</text><text x="1740.80" y="1100.00" font-size="9.5" class="b">12c</text><text x="1740.80" y="1141.10" font-size="9.5" class="b">12d</text><text x="1518.90" y="1058.20" font-size="9.5" class="b">13</text><text x="1533.70" y="1056.90" font-size="7.7" textLength="31.10" lengthAdjust="spacing">Statutory</text><text x="1533.70" y="1067.10" font-size="7.7" textLength="33.60" lengthAdjust="spacing">employee</text><text x="1599.70" y="1056.90" font-size="7.7" textLength="38.60" lengthAdjust="spacing">Retirement</text><text x="1599.70" y="1067.10" font-size="7.7" textLength="14.80" lengthAdjust="spacing">plan</text><text x="1666.30" y="1056.90" font-size="7.7" textLength="37.50" lengthAdjust="spacing">Third-party</text><text x="1666.30" y="1067.10" font-size="7.7" textLength="28.10" lengthAdjust="spacing">sick pay</text><text x="1558.00" y="857.60" font-size="16.9" class="m b" textLength="81.60" lengthAdjust="spacing">56081.18</text><text x="1756.40" y="857.60" font-size="16.9" class="m b" textLength="71.40" lengthAdjust="spacing">19127.2</text><text x="1558.00" y="895.10" font-size="16.9" class="m b" textLength="81.60" lengthAdjust="spacing">66584.46</text><text x="1756.40" y="895.10" font-size="16.9" class="m b" textLength="71.40" lengthAdjust="spacing">5093.71</text><text x="1558.00" y="930.80" font-size="16.9" class="m b" textLength="81.60" lengthAdjust="spacing">45427.75</text><text x="1804.60" y="930.80" font-size="16.9" class="m b" textLength="61.20" lengthAdjust="spacing">1317.4</text><text x="1558.00" y="966.50" font-size="16.9" class="m b" textLength="81.60" lengthAdjust="spacing">66584.46</text><text x="1804.60" y="966.50" font-size="16.9" class="m b" textLength="81.60" lengthAdjust="spacing">45427.75</text><text x="1804.60" y="1001.70" font-size="16.9" class="m b" textLength="30.60" lengthAdjust="spacing">139</text><text x="1557.40" y="1043.60" font-size="16.9" class="m b" textLength="30.60" lengthAdjust="spacing">102</text><text x="1772.30" y="1043.60" font-size="16.9" class="m b" textLength="10.20" lengthAdjust="spacing">E</text><text x="1804.60" y="1043.60" font-size="16.9" class="m b" textLength="40.80" lengthAdjust="spacing">5914</text><text x="1772.30" y="1082.70" font-size="16.9" class="m b" textLength="10.20" lengthAdjust="spacing">D</text><text x="1804.60" y="1082.70" font-size="16.9" class="m b" textLength="30.60" lengthAdjust="spacing">831</text><text x="1772.30" y="1127.30" font-size="16.9" class="m b" textLength="10.20" lengthAdjust="spacing">G</text><text x="1804.60" y="1127.30" font-size="16.9" class="m b" textLength="30.60" lengthAdjust="spacing">316</text><text x="1772.30" y="1167.60" font-size="16.9" class="m b" textLength="10.20" lengthAdjust="spacing">E</text><text x="1804.60" y="1167.60" font-size="16.9" class="m b" textLength="30.60" lengthAdjust="spacing">661</text><text x="1012.80" y="1197.20" font-size="9.5" class="b">15</text><text x="1030.00" y="1197.20" font-size="9.5" textLength="21.80" lengthAdjust="spacing">State</text><text x="1074.50" y="1197.20" font-size="9.5" textLength="116.80" lengthAdjust="spacing">Employer's state ID number</text><text x="1272.20" y="1197.20" font-size="9.5" textLength="107.80" lengthAdjust="spacing">16  State wages, tips, etc.</text><text x="1417.60" y="1197.20" font-size="9.5" textLength="86.20" lengthAdjust="spacing">17  State income tax</text><text x="1559.20" y="1197.20" font-size="9.5" textLength="108.10" lengthAdjust="spacing">18  Local wages, tips, etc.</text><text x="1714.00" y="1197.20" font-size="9.5" textLength="86.30" lengthAdjust="spacing">19  Local income tax</text><text x="1854.30" y="1197.20" font-size="9.5" textLength="74.00" lengthAdjust="spacing">20  Locality name</text><text x="1021.30" y="1218.00" font-size="16.9" class="m b" textLength="20.50" lengthAdjust="spacing">WV</text><text x="1109.80" y="1218.00" font-size="16.9" class="m b" textLength="102.50" lengthAdjust="spacing">643-86-468</text><text x="1270.00" y="1218.00" font-size="16.9" class="m b" textLength="82.00" lengthAdjust="spacing">27219.05</text><text x="1415.80" y="1218.00" font-size="16.9" class="m b" textLength="61.50" lengthAdjust="spacing">1517.1</text><text x="1558.00" y="1218.00" font-size="16.9" class="m b" textLength="82.00" lengthAdjust="spacing">69617.91</text><text x="1712.40" y="1218.00" font-size="16.9" class="m b" textLength="71.75" lengthAdjust="spacing">7935.37</text><text x="1021.30" y="1253.00" font-size="16.9" class="m b" textLength="20.50" lengthAdjust="spacing">NJ</text><text x="1109.80" y="1253.00" font-size="16.9" class="m b" textLength="102.50" lengthAdjust="spacing">401-25-455</text><text x="1270.00" y="1253.00" font-size="16.9" class="m b" textLength="82.00" lengthAdjust="spacing">30829.36</text><text x="1415.80" y="1253.00" font-size="16.9" class="m b" textLength="71.75" lengthAdjust="spacing">1443.46</text><text x="1558.00" y="1253.00" font-size="16.9" class="m b" textLength="82.00" lengthAdjust="spacing">53793.26</text><text x="1712.40" y="1253.00" font-size="16.9" class="m b" textLength="82.00" lengthAdjust="spacing">11216.09</text><text x="1854.00" y="1218.60" font-size="9.9" class="m b" textLength="89.30" lengthAdjust="spacing">Dominic Heights</text><text x="1854.00" y="1253.40" font-size="12.4" class="m b" textLength="89.80" lengthAdjust="spacing">Robles Mount</text><text x="1113.80" y="1276.70" font-size="16.7" class="b" textLength="115.50" lengthAdjust="spacingAndGlyphs">Wage and Tax</text><text x="1113.80" y="1298.60" font-size="16.7" class="b" textLength="82.90" lengthAdjust="spacingAndGlyphs">Statement</text><text x="1011.30" y="1298.90" font-size="9.9" class="b" textLength="51.30" lengthAdjust="spacingAndGlyphs">Form  W-2</text><text x="1422.30" y="1296.30" font-size="43.3" textLength="108.10" lengthAdjust="spacing">2010</text><text x="1668.50" y="1276.50" font-size="11.5" textLength="276.00" lengthAdjust="spacing">Department of the Treasury--Internal Revenue Service</text><text x="1578.50" y="801.65" font-size="9.5" textLength="366.00" lengthAdjust="spacing">This information is being furnished to the Internal Revenue Service.  If you are required</text><text x="1578.50" y="813.31" font-size="9.5" textLength="350.50" lengthAdjust="spacing">to file a tax return, a negligence penalty or other sanction may be imposed on you if</text><text x="1578.50" y="824.49" font-size="9.5" textLength="189.50" lengthAdjust="spacing">this income is taxable and you fail to report it.</text><text x="1011.30" y="1314.40" font-size="11.8" class="b" textLength="221.00" lengthAdjust="spacingAndGlyphs">Copy C For EMPLOYEE'S RECORDS.</text><text x="1011.30" y="1329.40" font-size="11.8" class="b" textLength="211.70" lengthAdjust="spacingAndGlyphs">(See enclosed Notice to Employee.)</text><text x="1711.00" y="1295.80" font-size="11.5" class="b" textLength="80.80" lengthAdjust="spacing">Safe, accurate,</text><text x="1711.00" y="1310.80" font-size="11.5" class="b" textLength="60.60" lengthAdjust="spacing">FAST!  Use</text></g>
<g transform="translate(1854.6,1300.5)"><ellipse cx="0" cy="0" rx="51.2" ry="11.9" fill="#1c1c1c" transform="rotate(-1.2)"/><g transform="scale(0.965)" fill="#fff" stroke="#fff" font-style="italic" font-weight="700"><text x="-48.4" y="1.3" font-size="7.6" textLength="15" lengthAdjust="spacingAndGlyphs" stroke-width="0.35">IRS</text><text x="-35.8" y="7.7" font-size="27" textLength="16.6" lengthAdjust="spacingAndGlyphs" stroke-width="1.3">e</text><text x="2.2" y="7.5" font-size="20.2" textLength="37" lengthAdjust="spacingAndGlyphs" stroke-width="1.1">file</text><path stroke="none" d="M-18.6,2.2 L-4.6,-3 L-7.6,0.9 L2.2,-3.6 L-11.4,4.8 L-8.8,0 Z"/></g></g>
</g>
</svg>
</body></html>
